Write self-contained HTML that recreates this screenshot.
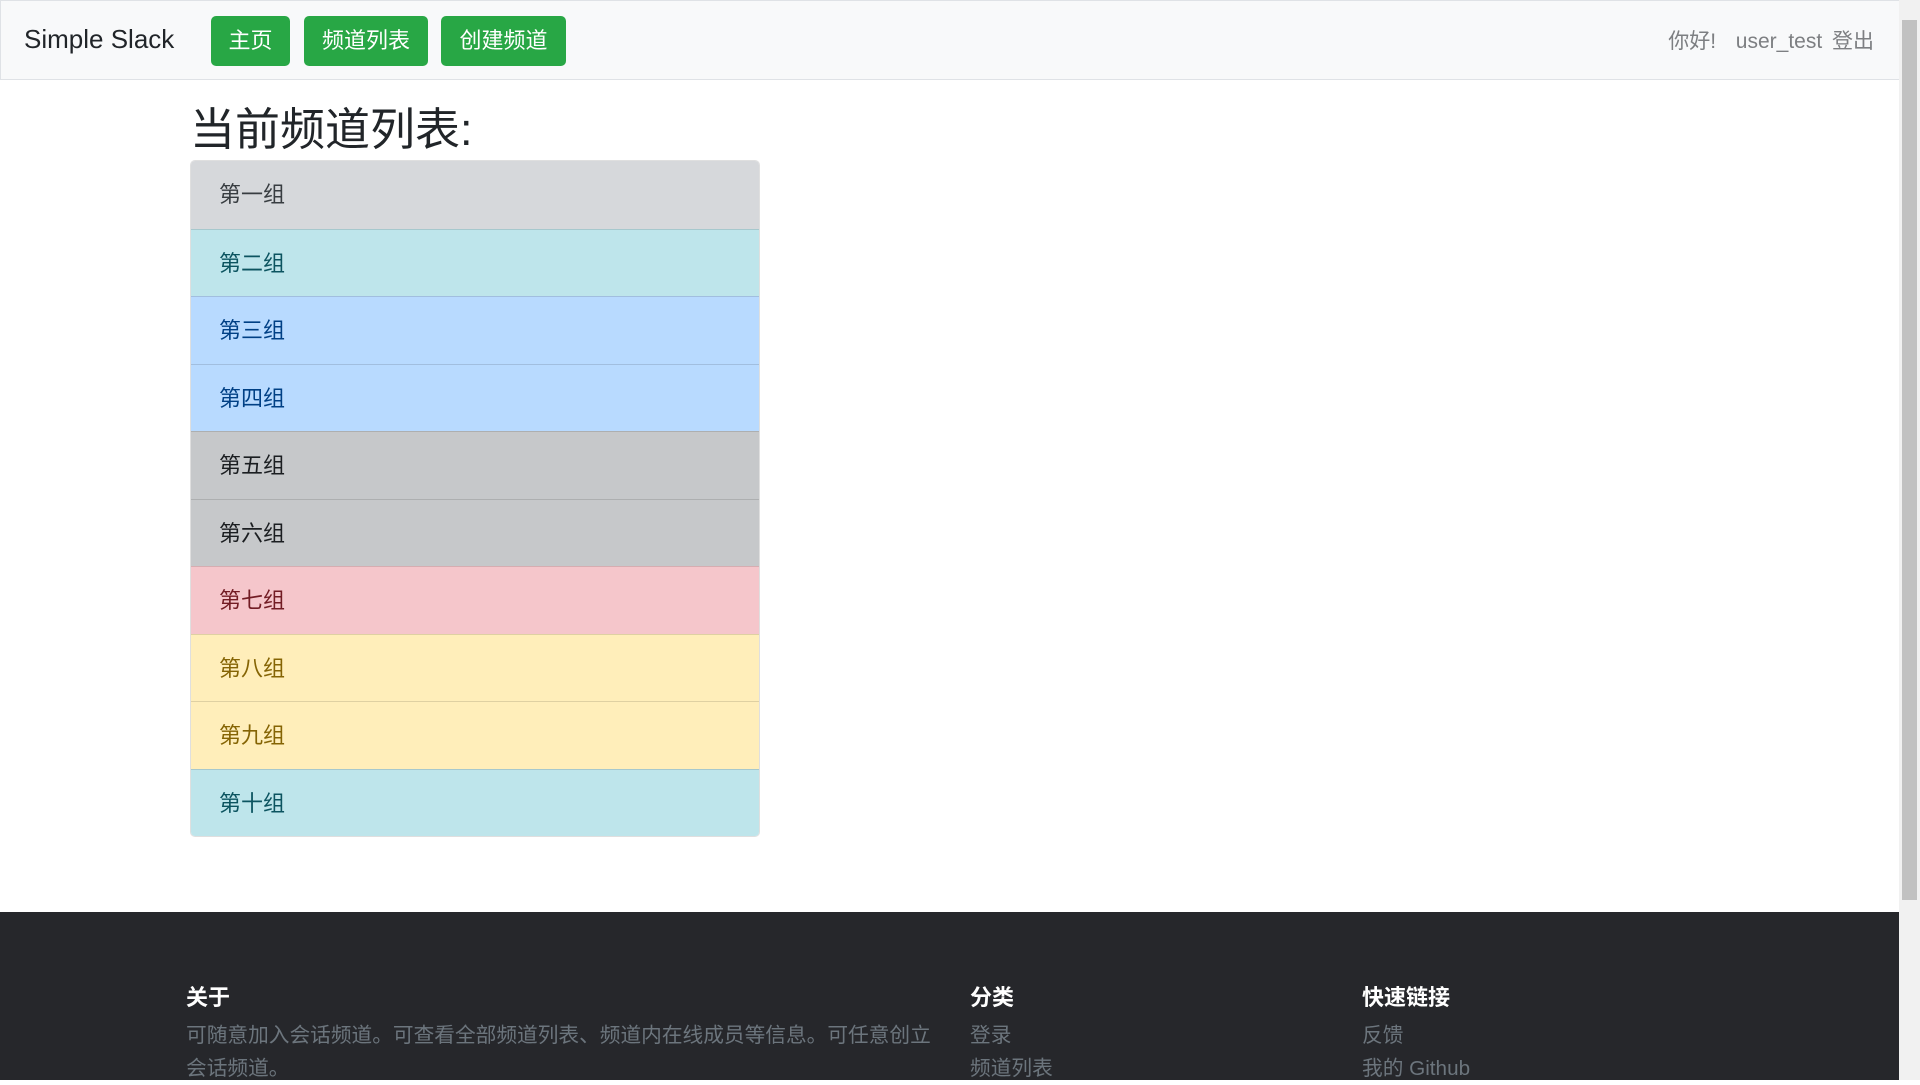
<!DOCTYPE html>
<html><head><meta charset="utf-8"><style>
*{box-sizing:border-box;margin:0;padding:0}
body{width:1920px;height:1080px;overflow:hidden;background:#fff;font-family:"Liberation Sans","Noto Sans CJK SC",sans-serif;position:relative}
.nav{position:absolute;left:0;top:0;width:1899px;height:80px;background:#f8f9fa;border:1px solid #dfe2e6;border-right:none}
.brand{position:absolute;left:23px;top:23px;font-size:26px;color:#212529}
.btn{position:absolute;top:15px;height:50px;background:#28a745;color:#fff;font-size:22px;line-height:50px;text-align:center;border-radius:5px}
.right{position:absolute;right:25px;top:24px;font-size:21px;color:#7d7f82;word-spacing:4px}
h2{position:absolute;left:190px;top:93px;font-size:45px;font-weight:400;color:#212529}
.list{position:absolute;left:190px;top:160px;width:570px;border-radius:5px;overflow:hidden;border:1px solid rgba(0,0,0,.125)}
.it{height:67.5px;line-height:67px;padding-left:28px;font-size:22px;border-top:1px solid rgba(0,0,0,.125)}
.it:first-child{border-top:none}
.s{background:#d6d8db;color:#383d41}.i{background:#bee5eb;color:#0c5460}.p{background:#b8daff;color:#004085}.d{background:#c6c8ca;color:#1b1e21}.r{background:#f5c6cb;color:#721c24}.w{background:#ffeeba;color:#856404}
.foot{position:absolute;left:0;top:912px;width:1899px;height:168px;background:#26272b}
.fh{position:absolute;top:68px;font-size:22px;font-weight:bold;color:#fff}
.ft{position:absolute;top:107px;font-size:20.7px;line-height:33px;color:#6c757d}
.sb{position:absolute;left:1899px;top:0;width:21px;height:1080px;background:#f1f1f1}
.th{position:absolute;left:1902px;top:20px;width:15px;height:880px;background:#c1c1c1}
</style></head><body>
<div class="nav">
<div class="brand">Simple Slack</div>
<div class="btn" style="left:210px;width:79px">主页</div>
<div class="btn" style="left:303px;width:124px">频道列表</div>
<div class="btn" style="left:440px;width:125px">创建频道</div>
<div class="right">你好!&nbsp; user_test 登出</div>
</div>
<h2>当前频道列表:</h2>
<div class="list">
<div class="it s">第一组</div><div class="it i">第二组</div><div class="it p">第三组</div><div class="it p">第四组</div><div class="it d">第五组</div><div class="it d">第六组</div><div class="it r">第七组</div><div class="it w">第八组</div><div class="it w">第九组</div><div class="it i">第十组</div>
</div>
<div class="foot">
<div class="fh" style="left:186px">关于</div>
<div class="ft" style="left:186px">可随意加入会话频道。可查看全部频道列表、频道内在线成员等信息。可任意创立<br>会话频道。</div>
<div class="fh" style="left:970px">分类</div>
<div class="ft" style="left:970px">登录<br>频道列表</div>
<div class="fh" style="left:1362px">快速链接</div>
<div class="ft" style="left:1362px">反馈<br>我的 Github</div>
</div>
<div class="sb"></div><div class="th"></div>
</body></html>
